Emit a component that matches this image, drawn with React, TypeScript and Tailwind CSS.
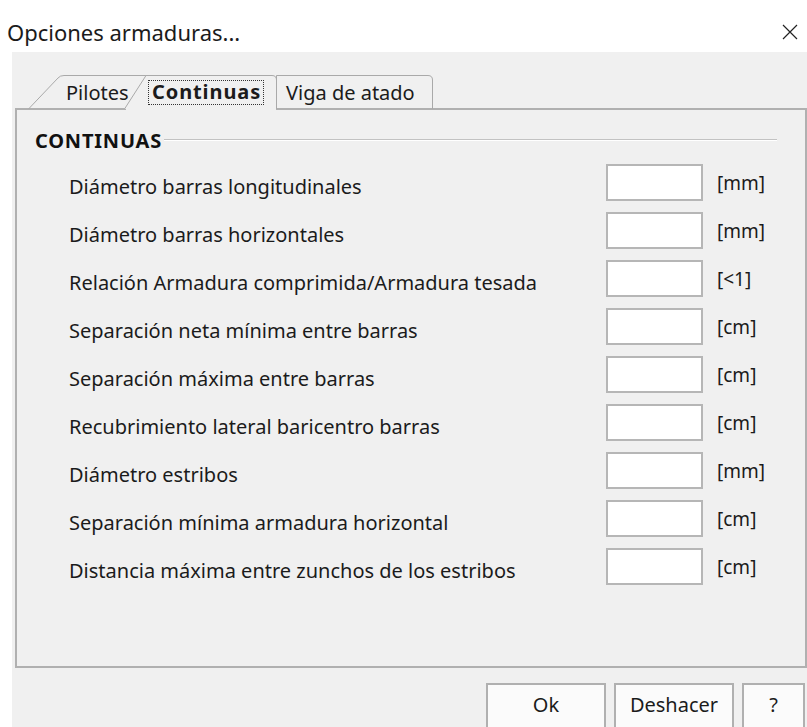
import React from 'react'

interface Field {
  label: string
  unit: string
}

const fields: Field[] = [
  { label: 'Diámetro barras longitudinales', unit: '[mm]' },
  { label: 'Diámetro barras horizontales', unit: '[mm]' },
  { label: 'Relación Armadura comprimida/Armadura tesada', unit: '[<1]' },
  { label: 'Separación neta mínima entre barras', unit: '[cm]' },
  { label: 'Separación máxima entre barras', unit: '[cm]' },
  { label: 'Recubrimiento lateral baricentro barras', unit: '[cm]' },
  { label: 'Diámetro estribos', unit: '[mm]' },
  { label: 'Separación mínima armadura horizontal', unit: '[cm]' },
  { label: 'Distancia máxima entre zunchos de los estribos', unit: '[cm]' },
]

function CloseIcon() {
  return (
    <svg width="16" height="16" viewBox="0 0 16 16" fill="none" stroke="#222" strokeWidth="1.2">
      <path d="M1 1 L15 15 M15 1 L1 15" />
    </svg>
  )
}

// Tab outlines: the first two tabs have a slanted left edge,
// the active one hides the panel's top border beneath it
function Tabs() {
  return (
    <div className="relative z-10 flex h-[34px] ml-[16px]">
      <div className="relative w-[118px] h-full">
        <svg className="absolute inset-0" width="118" height="34" fill="none" stroke="#a9a9a9">
          <path d="M0.5 34 L30 3 Q32 0.5 36 0.5 L118 0.5" />
        </svg>
        <span className="absolute left-[38px] top-[3px] text-[20px]">Pilotes</span>
      </div>
      <div className="relative -ml-[22px] w-[153px] h-full">
        <svg className="absolute inset-0" width="153" height="34" fill="#f0f0f0" stroke="#a9a9a9">
          <path d="M0.5 34 L22 0.5 L148 0.5 Q152.5 0.5 152.5 5 L152.5 34" />
        </svg>
        <div className="absolute left-[2px] right-[1px] -bottom-[2px] h-[3px] bg-[#f0f0f0]" />
        <span className="absolute left-[24px] top-[5px] h-[25px] pl-[3px] pr-[2px] border border-dotted border-[#333] text-[20px] font-bold tracking-[0.9px] leading-[22px]">
          Continuas
        </span>
      </div>
      <div className="relative -ml-px w-[157px] h-full">
        <svg className="absolute inset-0" width="157" height="34" fill="none" stroke="#a9a9a9">
          <path d="M0.5 34 L0.5 0.5 L152 0.5 Q156.5 0.5 156.5 5 L156.5 34" />
        </svg>
        <span className="absolute left-[10px] top-[3px] text-[20px]">Viga de atado</span>
      </div>
    </div>
  )
}

export default function App() {
  return (
    <div className="w-[807px] h-[727px] overflow-hidden bg-white text-[#1b1b1b] font-['Noto_Sans',sans-serif]">
      {/* Title bar */}
      <div className="flex h-[52px] items-center justify-between pl-[7px] pr-[9px]">
        <span className="text-[22px] mt-[12px]">Opciones armaduras...</span>
        <div className="mt-[12px]">
          <CloseIcon />
        </div>
      </div>

      <div className="ml-[12px] h-[675px] bg-[#f0f0f0] pt-[23px]">
        <Tabs />

        {/* Tab page */}
        <div className="-mt-px ml-[3px] h-[560px] border-2 border-[#b0b0b0] bg-[#f0f0f0]">
          <div className="flex items-center h-[52px] pt-[10px] pl-[18px] pr-[28px]">
            <span className="text-[20px] font-bold tracking-[0.8px] text-[#111]">CONTINUAS</span>
            <div className="flex-1 ml-[2px] -mt-[3px] border-t border-[#c2c2c2] border-b border-b-white" />
          </div>

          <div className="mt-[2px] pl-[52px]">
            {fields.map((f) => (
              <div key={f.label} className="grid grid-cols-[537px_97px_auto] h-[48px]">
                <span className="pt-[8px] text-[20px]">{f.label}</span>
                <div className="h-[37px] border-2 border-[#b6b6b6] bg-white" />
                <span className="pl-[14px] pt-[5px] text-[19px]">{f.unit}</span>
              </div>
            ))}
          </div>
        </div>

        {/* Dialog buttons */}
        <div className="flex justify-end gap-[8px] mt-[15px] pr-[2px]">
          <button className="w-[120px] h-[50px] pb-[6px] border-2 border-[#b0b0b0] bg-[#fbfbfb] text-[20px]">Ok</button>
          <button className="w-[120px] h-[50px] pb-[6px] border-2 border-[#b0b0b0] bg-[#fbfbfb] text-[20px]">Deshacer</button>
          <button className="w-[63px] h-[50px] pb-[6px] border-2 border-[#b0b0b0] bg-[#fbfbfb] text-[20px]">?</button>
        </div>
      </div>
    </div>
  )
}
